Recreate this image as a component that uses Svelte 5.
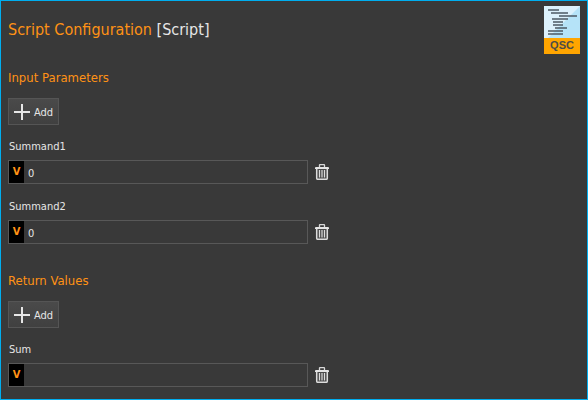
<script>
  let sections = $state([
    {
      title: 'Input Parameters',
      fields: [
        { name: 'Summand1', value: '0' },
        { name: 'Summand2', value: '0' },
      ],
    },
    { title: 'Return Values', fields: [{ name: 'Sum', value: '' }] },
  ]);

  function add(section) {
    section.fields.push({ name: `Value${section.fields.length + 1}`, value: '' });
  }

  function remove(section, index) {
    section.fields.splice(index, 1);
  }
</script>

<main class="panel">
  <header class="header">
    <h1>Script Configuration <span class="name">[Script]</span></h1>
    <svg class="logo" width="36" height="48" viewBox="0 0 36 48" role="img" aria-label="QSC">
      <rect width="36" height="32" fill="#b5e3f8" />
      <path d="M0 0H36L4 32H0Z" fill="#dcf1fc" />
      <path d="M0 32H36V48H0Z" fill="#ffa500" />
      <path
        d="M4 4H15M7 7H24M15 10H33M8 13H24M9 16H19M9 19H19M11 22H23M4 25H19M4 28H19"
        stroke="#4c5a64"
        stroke-width="1.6"
      />
      <text x="18" y="43" text-anchor="middle" class="logo-text">QSC</text>
    </svg>
  </header>

  {#each sections as section, s}
    <section>
      <h2>{section.title}</h2>
      <button class="add" type="button" onclick={() => add(section)}>
        <svg width="16" height="16" viewBox="0 0 16 16" aria-hidden="true">
          <path d="M8 0V16M0 8H16" stroke="#e6e6e6" stroke-width="2" />
        </svg>
        <span>Add</span>
      </button>
      {#each section.fields as field, i}
        <div class="field">
          <label for="field-{s}-{i}">{field.name}</label>
          <div class="row">
            <div class="box">
              <span class="type">V</span>
              <input id="field-{s}-{i}" type="text" bind:value={field.value} />
            </div>
            <button
              class="remove"
              type="button"
              aria-label="Remove {field.name}"
              onclick={() => remove(section, i)}
            >
              <svg width="14" height="16" viewBox="0 0 14 16" aria-hidden="true">
                <path d="M4.5 3V1.2Q4.5 .7 5 .7H9Q9.5 .7 9.5 1.2V3" fill="none" stroke="#d8d8d8" stroke-width="1.3" />
                <path d="M0 5V3.6Q0 3 1 3H13Q14 3 14 3.6V5Z" fill="#e4e4e4" />
                <path d="M1.7 5V14.2Q1.7 15.3 2.8 15.3H11.2Q12.3 15.3 12.3 14.2V5" fill="#4a4a4a" stroke="#dcdcdc" stroke-width="1.5" />
                <path d="M4.5 6V13.5M7 6V13.5M9.5 6V13.5" stroke="#dcdcdc" stroke-width="1.2" />
              </svg>
            </button>
          </div>
        </div>
      {/each}
    </section>
  {/each}
</main>

<style>
  :global(body) {
    margin: 0;
    background: #393939;
  }

  .panel {
    box-sizing: border-box;
    min-height: 100vh;
    padding: 5px 7px 11px;
    border: 1px solid #00aeef;
    background: #393939;
    color: #e6e6e6;
    font-family: Tahoma, 'DejaVu Sans Condensed', 'DejaVu Sans', sans-serif;
    font-size: 11px;
  }

  .header {
    display: flex;
    justify-content: space-between;
    align-items: center;
    height: 48px;
  }

  h1,
  h2 {
    margin: 0;
    color: #ff9215;
    font-weight: normal;
  }

  h1 {
    font-size: 16px;
    line-height: 20px;
  }

  .name {
    color: #e6e6e6;
  }

  .logo {
    flex: none;
  }

  .logo-text {
    fill: #4c4c48;
    font: bold 11px 'Liberation Sans', Arial, sans-serif;
  }

  section {
    padding-top: 14px;
  }

  section + section {
    padding-top: 27px;
  }

  h2 {
    font-size: 13px;
    line-height: 19px;
  }

  .add {
    display: flex;
    align-items: center;
    gap: 4px;
    box-sizing: border-box;
    height: 27px;
    margin-top: 11px;
    padding: 0 5px;
    border: 1px solid #555;
    background: linear-gradient(#4a4a4a, #404040);
    color: #e6e6e6;
    font: inherit;
  }

  .add span {
    padding-top: 2px;
  }

  .field {
    margin-top: 12px;
  }

  .field + .field {
    margin-top: 13px;
  }

  label {
    display: block;
    margin-bottom: 3px;
    padding-left: 1px;
    line-height: 20px;
  }

  .row {
    display: flex;
    align-items: center;
    gap: 7px;
  }

  .box {
    display: flex;
    flex: 0 1 300px;
    box-sizing: border-box;
    height: 24px;
    border: 1px solid #585858;
  }

  .type {
    flex: none;
    width: 15px;
    background: #000;
    color: #ff9215;
    font-weight: bold;
    line-height: 22px;
    text-align: center;
  }

  input {
    flex: 1;
    min-width: 0;
    padding: 2px 4px 0;
    border: 0;
    outline: 0;
    background: transparent;
    color: #e6e6e6;
    font: inherit;
  }

  .remove {
    display: flex;
    padding: 0;
    border: 0;
    background: none;
  }
</style>
